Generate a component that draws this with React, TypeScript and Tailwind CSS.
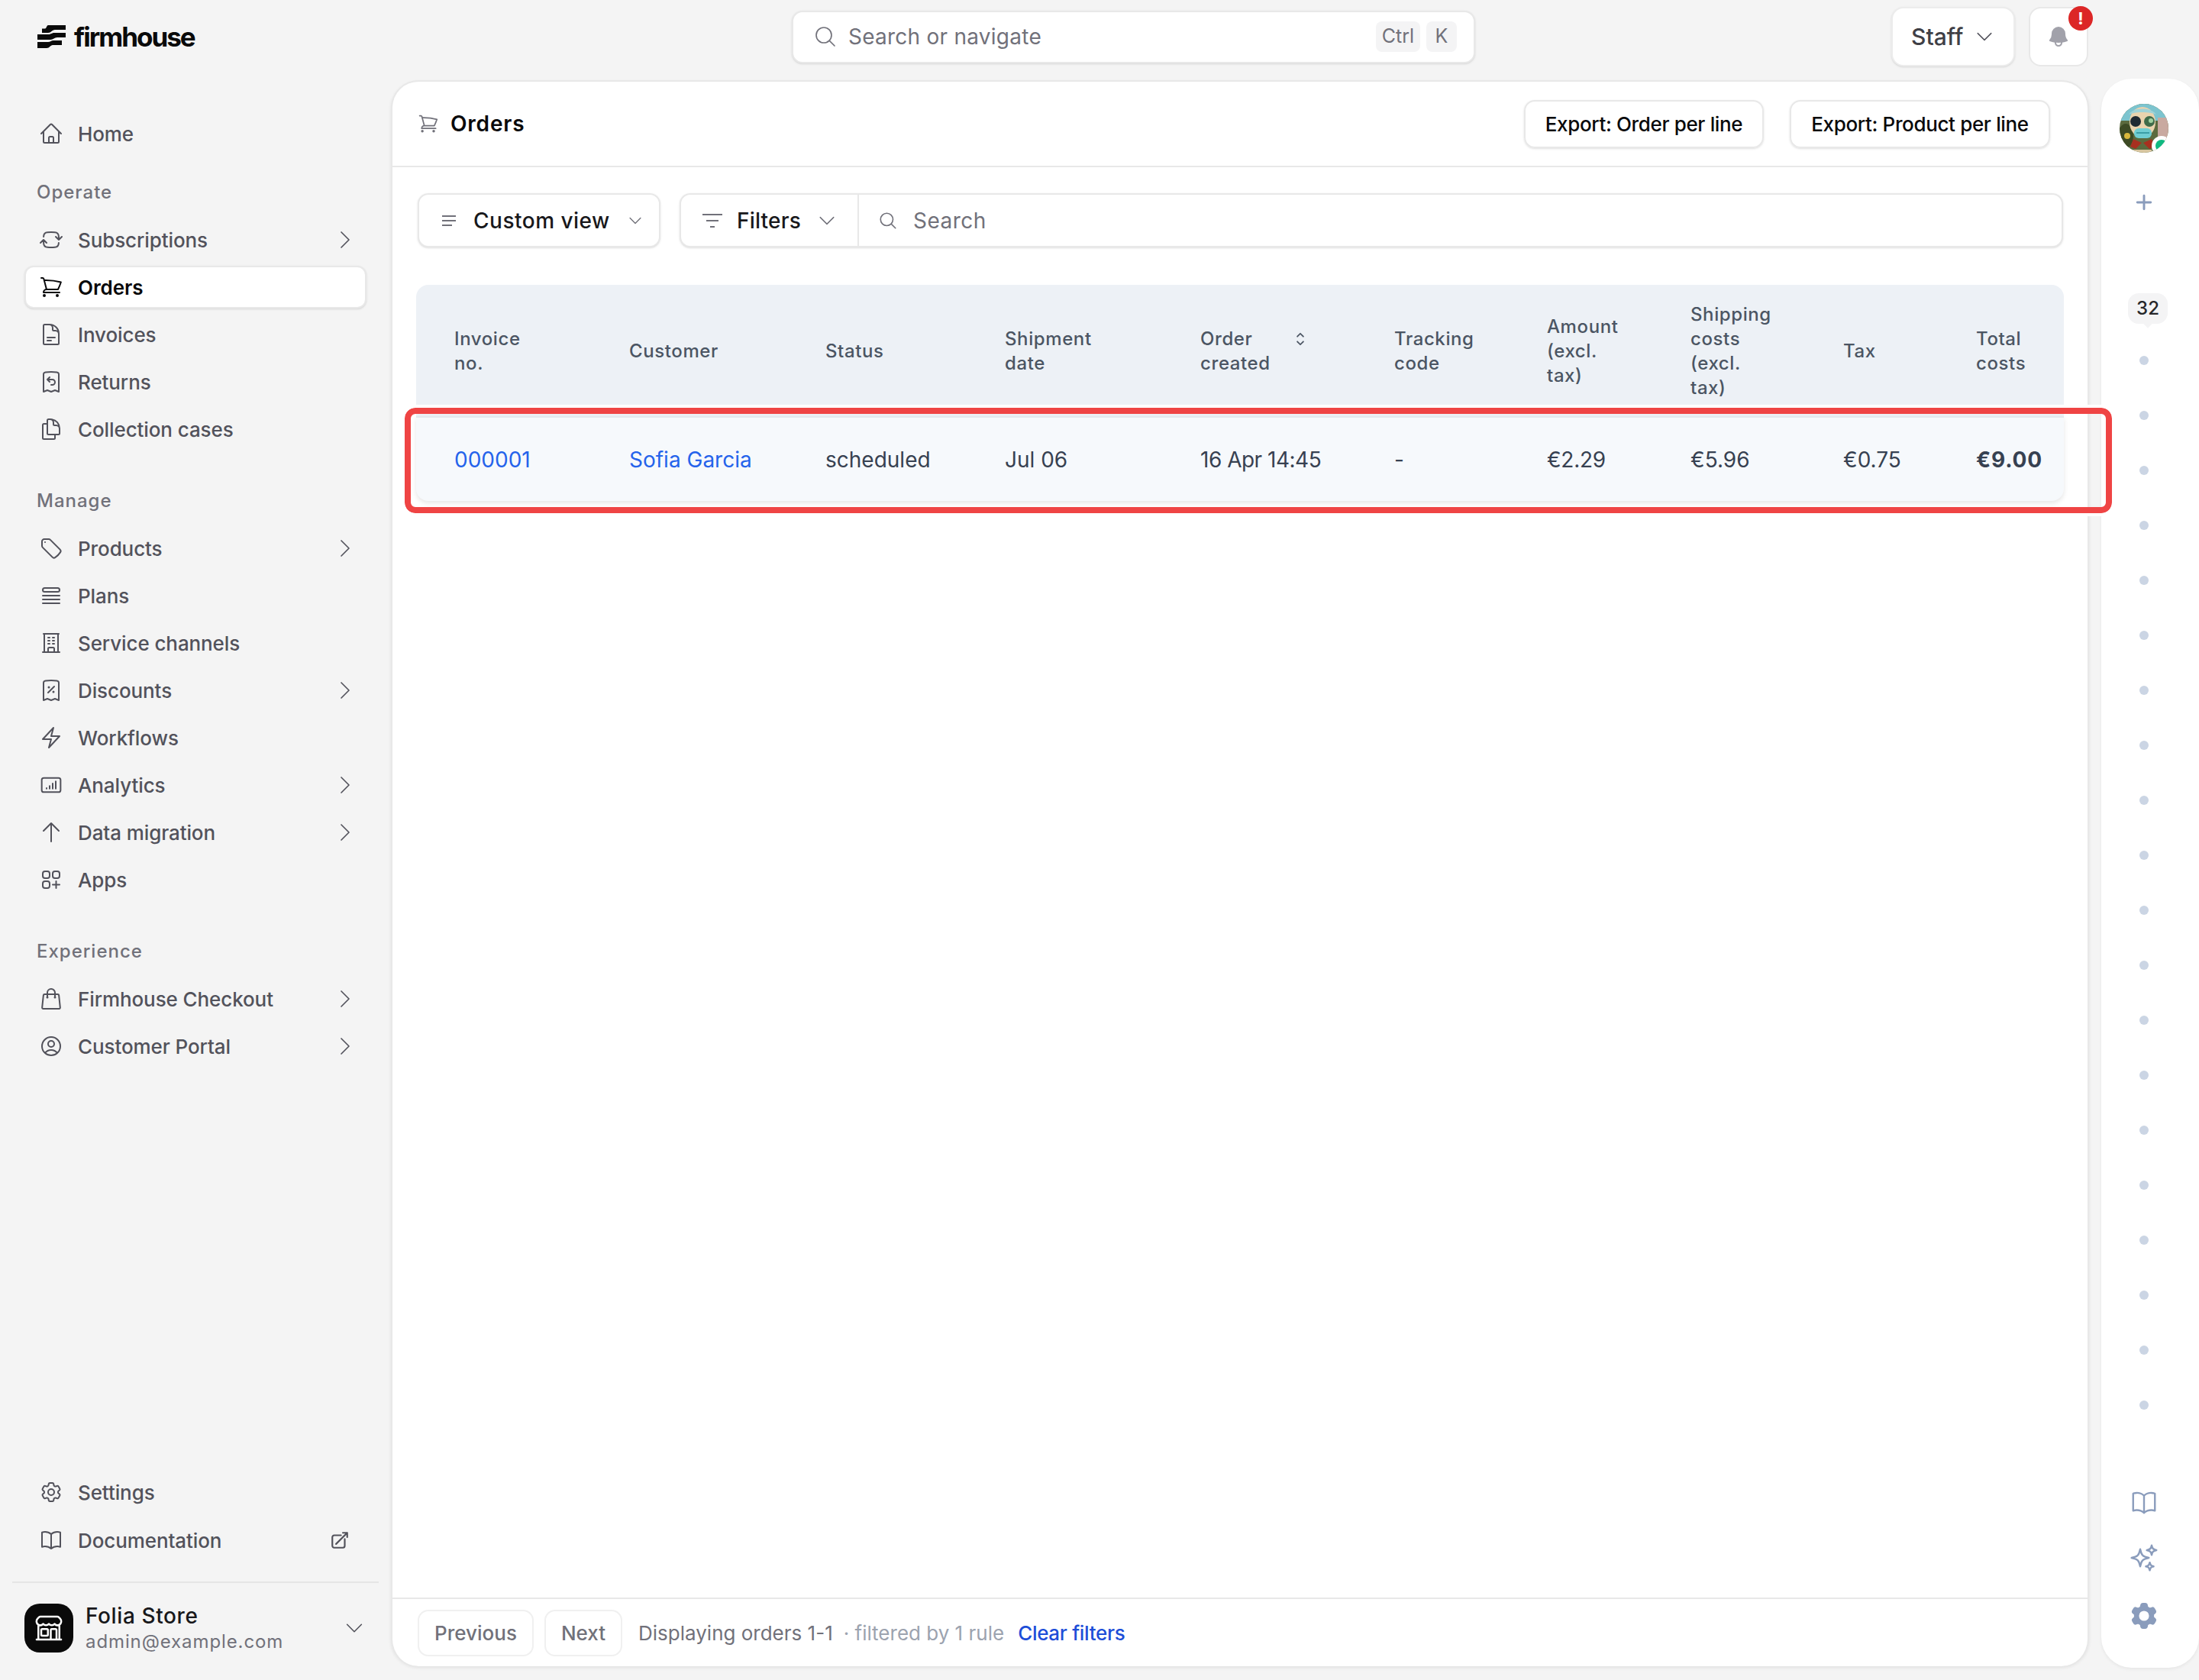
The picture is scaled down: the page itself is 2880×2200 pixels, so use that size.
import React from "react";
import {
  HiOutlineHome,
  HiOutlineArrowPathRoundedSquare,
  HiOutlineShoppingCart,
  HiOutlineDocumentText,
  HiOutlineReceiptRefund,
  HiOutlineDocumentDuplicate,
  HiOutlineTag,
  HiOutlineQueueList,
  HiOutlineBuildingOffice,
  HiOutlineReceiptPercent,
  HiOutlineBolt,
  HiOutlineArrowUp,
  HiOutlineSquaresPlus,
  HiOutlineShoppingBag,
  HiOutlineUserCircle,
  HiOutlineCog6Tooth,
  HiOutlineBookOpen,
  HiOutlineArrowTopRightOnSquare,
  HiOutlineChevronRight,
  HiOutlineChevronDown,
  HiOutlineMagnifyingGlass,
  HiOutlineBuildingStorefront,
  HiOutlineSparkles,
  HiOutlinePlus,
  HiBell,
  HiCog6Tooth,
  HiMiniChevronUpDown,
} from "react-icons/hi2";

const AnalyticsIcon = ({ className }: { className?: string }) => (
  <svg viewBox="0 0 24 24" fill="none" stroke="currentColor" strokeWidth="1.5" strokeLinecap="round" className={className}>
    <rect x="2.75" y="5" width="18.5" height="14" rx="2" />
    <path d="M7.5 15.5v-.5M10.5 15.5v-2.5M13.5 15.5v-5M16.5 15.5v-7" />
  </svg>
);

const Logo = () => (
  <svg viewBox="0 0 37 30" className="w-[37px] h-[30px]" fill="#0a0a0a">
    <path d="M14 0H37V6H23C19 6 18 10 14 10H6V4.5H10C12 4.5 12 0 14 0Z" />
    <path d="M0 12H14C18 12 19 10 22 10H37V16H26C22 16 21 19 17 19H0Z" />
    <path d="M0 22H14C17 22 18 20 21 20H32V26H20C17 26 16 30 12 30H0Z" />
  </svg>
);

const Avatar = () => (
  <div className="relative w-[64px] h-[64px] rounded-full overflow-hidden">
    <svg viewBox="0 0 64 64" className="w-[64px] h-[64px]">
      <rect width="64" height="64" fill="#5b6a3e" />
      <rect width="64" height="22" fill="#7cc4cf" />
      <ellipse cx="8" cy="42" rx="10" ry="16" fill="#3d4a24" />
      <circle cx="10" cy="42" r="4" fill="#d8b73c" />
      <rect x="50" y="18" width="14" height="36" fill="#c9a9a0" />
      <ellipse cx="30" cy="24" rx="17" ry="20" fill="#e9d3ae" />
      <path d="M12 14c6-10 30-10 36 0-8-4-28-4-36 0z" fill="#9fd3d8" />
      <circle cx="21" cy="23" r="7" fill="#1f2a33" />
      <circle cx="39" cy="23" r="7" fill="#3f6b4a" />
      <circle cx="41" cy="22" r="3" fill="#9ed0a0" />
      <rect x="19" y="32" width="23" height="13" rx="6" fill="#6fcdd2" />
      <path d="M22 38h17" stroke="#3b9ea6" strokeWidth="2" />
      <path d="M18 46l11 5-8 8-7-3zM42 46l-11 5 8 8 7-3z" fill="#a8301f" />
      <path d="M18 60h24v4H18z" fill="#d8c6a0" />
    </svg>
    <span className="absolute right-[-4px] bottom-[-4px] w-[26px] h-[26px] rounded-full bg-white flex items-center justify-center">
      <span className="w-[16px] h-[16px] rounded-full bg-[#10b981]" />
    </span>
  </div>
);

type NavItem = { label: string; icon: React.ComponentType<{ className?: string }>; chevron?: boolean; active?: boolean };

const operate: NavItem[] = [
  { label: "Subscriptions", icon: HiOutlineArrowPathRoundedSquare, chevron: true },
  { label: "Orders", icon: HiOutlineShoppingCart, active: true },
  { label: "Invoices", icon: HiOutlineDocumentText },
  { label: "Returns", icon: HiOutlineReceiptRefund },
  { label: "Collection cases", icon: HiOutlineDocumentDuplicate },
];

const manage: NavItem[] = [
  { label: "Products", icon: HiOutlineTag, chevron: true },
  { label: "Plans", icon: HiOutlineQueueList },
  { label: "Service channels", icon: HiOutlineBuildingOffice },
  { label: "Discounts", icon: HiOutlineReceiptPercent, chevron: true },
  { label: "Workflows", icon: HiOutlineBolt },
  { label: "Analytics", icon: AnalyticsIcon, chevron: true },
  { label: "Data migration", icon: HiOutlineArrowUp, chevron: true },
  { label: "Apps", icon: HiOutlineSquaresPlus },
];

const experience: NavItem[] = [
  { label: "Firmhouse Checkout", icon: HiOutlineShoppingBag, chevron: true },
  { label: "Customer Portal", icon: HiOutlineUserCircle, chevron: true },
];

const NavRow = ({ item }: { item: NavItem }) => {
  const Icon = item.icon;
  return (
    <div
      className={`flex items-center h-[56px] rounded-[12px] text-[26px] tracking-[-0.1px] ${
        item.active
          ? "-mx-[2px] pl-[17px] pr-[10px] bg-white text-[#09090b] font-semibold border-2 border-[#e8e8e8] shadow-sm"
          : "pl-[17px] pr-[10px] text-[#52525b] font-medium"
      }`}
    >
      <Icon className="w-[32px] h-[32px] shrink-0" />
      <span className="ml-[19px]">{item.label}</span>
      {item.chevron && <HiOutlineChevronRight className="w-[32px] h-[32px] ml-auto text-[#52525b] stroke-[1.25]" />}
    </div>
  );
};

const NavGroup = ({ title, items, first }: { title: string; items: NavItem[]; first?: boolean }) => (
  <div className={first ? "mt-[31px]" : "mt-[48px]"}>
    <div className="h-[36px] mb-[16px] pl-[14px] flex items-center text-[24px] font-medium tracking-[1px] text-[#71717a]">{title}</div>
    <div className="flex flex-col gap-[6px]">
      {items.map((item) => (
        <NavRow key={item.label} item={item} />
      ))}
    </div>
  </div>
);

const Sidebar = () => (
  <aside className="w-[512px] shrink-0 h-full flex flex-col">
    <div className="h-[147px] pt-[33px] pl-[49px]">
      <div className="flex items-center gap-[11px] h-[30px]">
        <Logo />
        <span className="text-[35px] font-bold tracking-[-2px] text-[#0a0a0a] leading-none">firmhouse</span>
      </div>
    </div>
    <div className="px-[34px]">
      <NavRow item={{ label: "Home", icon: HiOutlineHome }} />
      <NavGroup title="Operate" items={operate} first />
      <NavGroup title="Manage" items={manage} />
      <NavGroup title="Experience" items={experience} />
    </div>
    <div className="mt-auto">
      <div className="px-[34px] flex flex-col gap-[7px]">
        <NavRow item={{ label: "Settings", icon: HiOutlineCog6Tooth }} />
        <div className="flex items-center h-[56px] pl-[17px] pr-[17px] text-[26px] tracking-[-0.1px] font-medium text-[#52525b]">
          <HiOutlineBookOpen className="w-[32px] h-[32px] shrink-0" />
          <span className="ml-[19px]">Documentation</span>
          <HiOutlineArrowTopRightOnSquare className="w-[26px] h-[26px] ml-auto mr-[3px] stroke-2" />
        </div>
      </div>
      <div className="mt-[26px] mx-[16px] border-t-2 border-[#e5e5e5]" />
      <div className="mt-[27px] mb-[36px] pl-[32px] pr-[33px] h-[64px] flex items-start">
        <div className="w-[64px] h-[64px] rounded-[20px] bg-[#0a0a0a] flex items-center justify-center">
          <HiOutlineBuildingStorefront className="w-[40px] h-[40px] text-white" />
        </div>
        <div className="ml-[16px] flex flex-col">
          <span className="text-[28px] leading-[32px] tracking-[0.6px] font-medium text-[#18181b]">Folia Store</span>
          <span className="text-[24px] leading-[36px] text-[#71717a] tracking-[0.9px]">admin@example.com</span>
        </div>
        <HiOutlineChevronDown className="w-[30px] h-[30px] ml-auto self-center text-[#52525b] stroke-[1.25]" />
      </div>
    </div>
  </aside>
);

const TopBar = () => (
  <header className="h-[96px] flex items-center pl-[525px] pr-[145px]">
    <div className="w-[895px] h-[69px] bg-white rounded-[14px] border-2 border-[#e8e8e8] shadow-sm flex items-center pl-[26px] pr-[22px]">
      <HiOutlineMagnifyingGlass className="w-[32px] h-[32px] text-[#71717a] stroke-[1.25]" />
      <span className="ml-[14px] text-[28px] tracking-[0.25px] text-[#71717a]">Search or navigate</span>
      <span className="ml-auto h-[40px] px-[8px] rounded-[8px] bg-[#f4f4f5] text-[25px] text-[#71717a] flex items-center">Ctrl</span>
      <span className="ml-[8px] h-[40px] w-[40px] rounded-[8px] bg-[#f4f4f5] text-[25px] text-[#71717a] flex items-center justify-center">K</span>
    </div>
    <button className="ml-auto w-[162px] h-[78px] bg-white rounded-[16px] border-2 border-[#ececec] shadow-sm flex items-center pl-[24px] text-[30px] font-medium text-[#3f3f46]">
      Staff
      <HiOutlineChevronDown className="ml-[14px] w-[28px] h-[28px] text-[#52525b] stroke-[1.25]" />
    </button>
    <button className="relative ml-[18px] w-[78px] h-[78px] bg-white rounded-[16px] border-2 border-[#e8e8e8] flex items-center justify-center">
      <HiBell className="w-[32px] h-[32px] text-[#a1a1aa]" />
      <span className="absolute right-[-8px] top-[-3px] w-[32px] h-[32px] rounded-full bg-[#dc2626] text-white text-[22px] font-bold flex items-center justify-center">!</span>
    </button>
  </header>
);

const cols = "grid-cols-[279px_257px_235px_256px_254px_200px_188px_200px_174px_1fr]";

const headers: React.ReactNode[] = [
  <>Invoice<br />no.</>,
  "Customer",
  "Status",
  <>Shipment<br />date</>,
  <span className="flex items-start">
    <span>Order<br />created</span>
    <HiMiniChevronUpDown className="w-[24px] h-[24px] ml-[27px] mt-[4px]" />
  </span>,
  <>Tracking<br />code</>,
  <>Amount<br />(excl.<br />tax)</>,
  <>Shipping<br />costs<br />(excl.<br />tax)</>,
  "Tax",
  <>Total<br />costs</>,
];

const OrdersTable = () => (
  <div className="ml-[31px] w-[2158px]">
    <div className={`grid ${cols} h-[174px] bg-[#edf1f6] rounded-t-[16px] items-center text-[24px] leading-[32px] font-medium tracking-[0.6px] text-[#4b5563]`}>
      {headers.map((h, i) => (
        <div key={i} className={i === 0 ? "pl-[50px]" : ""}>{h}</div>
      ))}
    </div>
    <div className={`relative grid ${cols} h-[111px] -mt-[2px] bg-[#f6f9fc] border-t-2 border-[#e4e8ed] rounded-b-[16px] shadow-[0_3px_6px_rgba(0,0,0,0.1)] items-center text-[28px] text-[#374151]`}>
      <div className="pl-[50px] text-[#2563eb]">000001</div>
      <div className="text-[#2563eb]">Sofia Garcia</div>
      <div>scheduled</div>
      <div>Jul 06</div>
      <div className="tracking-[-0.5px]">16 Apr 14:45</div>
      <div>-</div>
      <div className="tracking-[-0.3px]">€2.29</div>
      <div>€5.96</div>
      <div>€0.75</div>
      <div className="font-bold tracking-[0.8px]">€9.00</div>
    </div>
  </div>
);

const Toolbar = () => (
  <div className="mt-[34px] ml-[33px] w-[2155px] h-[71px] flex gap-[25px]">
    <button className="w-[318px] h-full bg-white rounded-[14px] border-2 border-[#e8e8e8] shadow-sm flex items-center pl-[30px] text-[28px] tracking-[0.5px] font-medium text-[#18181b]">
      <svg viewBox="0 0 18 16" className="w-[18px] h-[16px] text-[#71717a]" fill="none" stroke="currentColor" strokeWidth="2">
        <path d="M0 2h18M0 8h18M0 14h13" />
      </svg>
      <span className="ml-[23px]">Custom view</span>
      <HiOutlineChevronDown className="ml-auto mr-[20px] w-[22px] h-[22px] text-[#71717a]" />
    </button>
    <div className="flex-1 h-full bg-white rounded-[14px] border-2 border-[#e8e8e8] shadow-sm flex items-center">
      <div className="w-[233px] h-full flex items-center pl-[28px] border-r-2 border-[#e8e8e8] text-[28px] tracking-[0.2px] font-medium text-[#18181b]">
        <svg viewBox="0 0 26 20" className="w-[26px] h-[20px] text-[#71717a]" fill="none" stroke="currentColor" strokeWidth="2">
          <path d="M0 2h26M5 10h16M10 18h6" />
        </svg>
        <span className="ml-[19px]">Filters</span>
        <HiOutlineChevronDown className="ml-auto mr-[26px] w-[28px] h-[28px] text-[#71717a] stroke-[1.25]" />
      </div>
      <HiOutlineMagnifyingGlass className="ml-[25px] w-[26px] h-[26px] text-[#71717a]" />
      <span className="ml-[20px] text-[28px] tracking-[0.5px] text-[#71717a]">Search</span>
    </div>
  </div>
);

const Panel = () => (
  <main className="w-[2224px] h-[2077px] mt-[2px] bg-white rounded-[36px] border-2 border-[#e8e8e8] border-b-0 shadow-[0_2px_4px_rgba(0,0,0,0.08)] flex flex-col">
    <div className="h-[112px] shrink-0 border-b-2 border-[#e8e8e8] flex items-center pl-[33px] pr-[49px]">
      <HiOutlineShoppingCart className="w-[28px] h-[28px] text-[#71717a]" />
      <h1 className="ml-[15px] text-[28px] font-semibold tracking-[0.8px] text-[#09090b]">Orders</h1>
      <button className="ml-auto h-[63px] w-[314px] rounded-[14px] border-2 border-[#e8e8e8] shadow-sm flex items-center justify-center text-[26px] font-medium tracking-[-0.35px] text-[#09090b]">Export: Order per line</button>
      <button className="ml-[34px] h-[63px] w-[341px] rounded-[14px] border-2 border-[#e8e8e8] shadow-sm flex items-center justify-center text-[26px] font-medium tracking-[-0.35px] text-[#09090b]">Export: Product per line</button>
    </div>
    <Toolbar />
    <div className="mt-[49px]">
      <OrdersTable />
    </div>
    <div className="mt-auto h-[90px] border-t-2 border-[#e8e8e8] flex items-center pl-[33px] text-[26px]">
      <button className="w-[152px] h-[61px] rounded-[14px] border-2 border-[#f0f0f0] text-[#71717a] font-medium">Previous</button>
      <button className="ml-[14px] w-[102px] h-[61px] rounded-[14px] border-2 border-[#f0f0f0] text-[#71717a] font-medium">Next</button>
      <span className="ml-[21px] text-[#71717a]">Displaying orders 1-1</span>
      <span className="ml-[14px] text-[#9ca3af]">· filtered by 1 rule</span>
      <span className="ml-[18px] text-[#1d4ed8] font-medium tracking-[-0.3px]">Clear filters</span>
    </div>
  </main>
);

const Rail = () => (
  <aside className="w-[128px] h-[2081px] pr-[16px] bg-white rounded-[40px] shadow-[0_2px_4px_rgba(0,0,0,0.06)] flex flex-col items-center">
    <div className="mt-[33px]">
      <Avatar />
    </div>
    <HiOutlinePlus className="mt-[51px] w-[28px] h-[28px] text-[#8a9cbc] stroke-[2.5]" />
    <div className="relative mt-[105px] ml-[10px] w-[52px] h-[40px] rounded-[14px] bg-[#f4f4f5] flex items-center justify-center text-[24px] font-medium text-[#27272a]">
      32
      <span className="absolute bottom-[-4px] left-[22px] w-[8px] h-[8px] rotate-45 bg-[#f4f4f5]" />
    </div>
    <div className="mt-[42px] flex flex-col items-center gap-[60px]">
      {Array.from({ length: 20 }).map((_, i) => (
        <span key={i} className="w-[12px] h-[12px] rounded-full bg-[#cbd5e4]" />
      ))}
    </div>
    <HiOutlineBookOpen className="mt-[103px] w-[38px] h-[38px] text-[#8a9cbc]" />
    <HiOutlineSparkles className="mt-[33px] w-[40px] h-[40px] text-[#8a9cbc]" />
    <HiCog6Tooth className="mt-[35px] w-[42px] h-[42px] text-[#8a9cbc]" />
  </aside>
);

export default function App() {
  return (
    <div className="font-['Inter','Liberation_Sans',sans-serif] relative w-[2880px] h-[2200px] bg-[#f4f4f4] flex overflow-hidden">
      <Sidebar />
      <div className="flex-1">
        <TopBar />
        <div className="flex gap-[16px] mt-[7px]">
          <Panel />
          <Rail />
        </div>
      </div>
      <div className="absolute left-[530px] top-[534px] w-[2236px] h-[138px] rounded-[14px] border-[8px] border-[#ef4444] outline-[4px] outline-white" />
    </div>
  );
}
